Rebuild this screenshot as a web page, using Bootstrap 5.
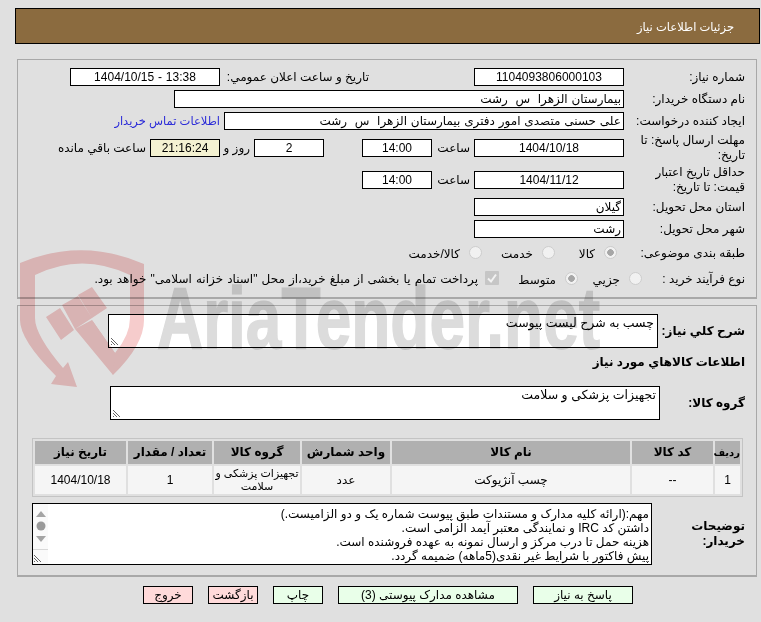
<!DOCTYPE html>
<html lang="fa" dir="rtl">
<head>
<meta charset="utf-8">
<title>جزئیات اطلاعات نیاز</title>
<link href="https://cdn.jsdelivr.net/npm/bootstrap@5.3.0/dist/css/bootstrap.min.css" rel="stylesheet">
<style>
html,body{height:622px;overflow:hidden}
body{background:#e0e0e0;font-family:"Liberation Sans","DejaVu Sans",sans-serif;font-size:12px;color:#000;line-height:15px;position:relative}
.wmark{position:absolute;left:0;top:0;z-index:2;width:761px;height:622px;pointer-events:none;mix-blend-mode:multiply}
.wmark text{font-family:"Liberation Sans",sans-serif;font-weight:700;font-size:88px;fill:#dcdcdc;stroke:#dcdcdc;stroke-width:1.500}
.sheet{padding:8px 1px 0 15px;position:relative;z-index:1}
.headbar{background:#8b6b3f;border:1px solid #000;height:36px;color:#fff;padding-right:25px;line-height:37px;font-size:11.5px}
.panel-a,.panel-b{border:1px solid #a8a8a8;border-bottom-width:2px;margin-left:2px;margin-right:3px;padding-right:11px}
.panel-a{margin-top:15px;height:240px;padding-top:6px}
.panel-b{margin-top:6px;height:272px;padding-top:8px}
.rowline{min-height:22px}
.rowline.tall{min-height:32px}
.rowline.opts{min-height:26px}
.lab{width:121px;padding-left:6px;flex:none}
.fld{background:#fff;border:1px solid #000;height:18px;line-height:16px;padding:0 2px;flex:none;white-space:pre;word-spacing:.5px}
.num{text-align:center}
.w450{width:450px}.w400{width:400px}.w150{width:150px}.w70{width:70px}
.clock{background:#f4f2d2}
.pubstamp{width:149px;margin-right:105px;flex:none}
.unit-hour{width:38px;margin-right:4px;flex:none}
.unit-day{width:30px;margin-right:4px;flex:none}
.gap38{margin-right:38px}
.remain{margin-right:4px}
.buyerlink{color:#2b2bd8;text-decoration:none;margin-right:4px;font-size:11.5px}
.rd{appearance:none;width:13px;height:13px;margin:0 0 2px 9px;background:#f1f1f1;border:1px solid #cdcdcd;border-radius:50%;flex:none}
.rd.on{background:radial-gradient(circle,#a6a6a6 0 3px,#f1f1f1 3.6px)}
.optxt{padding-top:2px;display:block}
.ckbox{width:14px;height:14px;margin:0 0 2px 7px;flex:none;display:block}
.pad7{padding-right:7px}
.opt1{width:40px}.opt2{width:51px}
.lab-short{width:103px;flex:none}
.opt3{width:64px}.opt4{width:79px}
.wide-sp{word-spacing:.8px}
.area{background:#fff;border:1px solid #000;position:relative;padding:1px 3px;flex:none}
.a550{width:550px;height:34px;font-size:12.5px}
.grip{position:absolute;left:1px;bottom:1px;width:10px;height:10px;display:block}
.lab-b{width:87px;flex:none;font-weight:700}
.lab-c{width:85px;flex:none;font-weight:700}
.lab-d{width:93px;padding-left:30px;flex:none;font-weight:700}
.infoline{height:28px;font-weight:700;margin-bottom:10px}
.itemtable{width:711px;border-collapse:separate;border-spacing:2px;border:1px solid #c4c4c4;margin:18px 2px 0 0;table-layout:fixed}
.itemtable th{background:#b0b0b0;height:23px;text-align:center;font-weight:700;padding:0}
.itemtable th.c1{font-size:10px}
.itemtable td{background:#f5f5f5;height:28px;text-align:center;padding:0;line-height:13px;vertical-align:middle}
.itemtable td.tight{font-size:11px;white-space:nowrap}
.c1{width:25px}.c2{width:81px}.c3{width:238px}.c4{width:88px}.c5{width:86px}.c6{width:84px}.c7{width:91px}
.noteline{margin-top:6px}
.note{width:620px;height:62px;line-height:14px;padding:3px 2px 0 16px;overflow:hidden;white-space:nowrap}
.scrollsim{position:absolute;left:0;top:0;bottom:0;width:15px;background:#fafafa;display:block;height:60px}
.btnbar{margin-top:9px;padding-right:127px;gap:15px}
.act{height:18px;border:1px solid #000;border-radius:0;background:#e9ffe9;color:#000;font-size:12px;line-height:16px;padding:0;flex:none}
.pinkish{background:#ffdada}
.w100{width:100px}.w180{width:180px}.w50{width:50px}
</style>
</head>
<body>
<svg class="wmark" viewBox="0 0 761 622" aria-hidden="true">
  <path fill="#f6cccc" d="M20 263Q82 237 144 264L144 320Q144 345 113 375L92 320 115 353Q130 335 130 318L130 275Q82 252 35 275L35 318Q35 335 63 368L68 362 77 387 51 384 56 376Q20 340 20 320Z"/>
  <path fill="#f6cccc" d="M62 305L78 296 92 318 75 329ZM78 295L92 287 107 308 92 318ZM46 317L60 308 74 330 61 340ZM75 329L92 320 115 353 113 375Z"/>
  <text x="157" y="348" textLength="443" lengthAdjust="spacingAndGlyphs" direction="ltr">AriaTender.net</text>
</svg>
<div class="sheet">
  <div class="headbar">جزئیات اطلاعات نیاز</div>

  <div class="panel-a">
    <div class="d-flex align-items-center rowline">
      <div class="lab">شماره نیاز:</div>
      <div class="fld num w150">1104093806000103</div>
      <div class="pubstamp">تاریخ و ساعت اعلان عمومي:</div>
      <div class="fld num w150">13:38 - 1404/10/15</div>
    </div>
    <div class="d-flex align-items-center rowline">
      <div class="lab">نام دستگاه خریدار:</div>
      <div class="fld w450">بیمارستان الزهرا  س  رشت</div>
    </div>
    <div class="d-flex align-items-center rowline">
      <div class="lab">ایجاد کننده درخواست:</div>
      <div class="fld w400">علی حسنی متصدی امور دفتری بیمارستان الزهرا  س  رشت</div>
      <a class="buyerlink" href="#">اطلاعات تماس خریدار</a>
    </div>
    <div class="d-flex align-items-center rowline tall">
      <div class="lab">مهلت ارسال پاسخ: تا تاریخ:</div>
      <div class="fld num w150">1404/10/18</div>
      <div class="unit-hour">ساعت</div>
      <div class="fld num w70">14:00</div>
      <div class="fld num w70 gap38">2</div>
      <div class="unit-day">روز و</div>
      <div class="fld num w70 clock">21:16:24</div>
      <div class="remain">ساعت باقي مانده</div>
    </div>
    <div class="d-flex align-items-center rowline tall">
      <div class="lab">حداقل تاریخ اعتبار قیمت: تا تاریخ:</div>
      <div class="fld num w150">1404/11/12</div>
      <div class="unit-hour">ساعت</div>
      <div class="fld num w70">14:00</div>
    </div>
    <div class="d-flex align-items-center rowline">
      <div class="lab">استان محل تحویل:</div>
      <div class="fld w150">گیلان</div>
    </div>
    <div class="d-flex align-items-center rowline">
      <div class="lab">شهر محل تحویل:</div>
      <div class="fld w150">رشت</div>
    </div>
    <div class="d-flex align-items-center rowline opts">
      <div class="lab">طبقه بندی موضوعی:</div>
      <div class="d-flex align-items-center pad7">
        <input class="rd on" type="radio" disabled checked aria-label="کالا"><span class="optxt opt1">کالا</span>
      </div>
      <div class="d-flex align-items-center">
        <input class="rd" type="radio" disabled aria-label="خدمت"><span class="optxt opt2">خدمت</span>
      </div>
      <div class="d-flex align-items-center">
        <input class="rd" type="radio" disabled aria-label="کالا/خدمت"><span class="optxt">کالا/خدمت</span>
      </div>
    </div>
    <div class="d-flex align-items-center rowline opts">
      <div class="lab-short">نوع فرآیند خرید :</div>
      <div class="d-flex align-items-center opt3">
        <input class="rd" type="radio" disabled aria-label="جزیي"><span class="optxt">جزیي</span>
      </div>
      <div class="d-flex align-items-center opt4">
        <input class="rd on" type="radio" disabled checked aria-label="متوسط"><span class="optxt">متوسط</span>
      </div>
      <svg class="ckbox" viewBox="0 0 14 14" aria-hidden="true"><rect width="14" height="14" rx="1" fill="#c6c6c6"/><path d="M3 7.500l3 3 5-7" fill="none" stroke="#f2f2f2" stroke-width="2"/></svg>
      <span class="wide-sp">پرداخت تمام یا بخشی از مبلغ خرید،از محل "اسناد خزانه اسلامی" خواهد بود.</span>
    </div>
  </div>

  <div class="panel-b">
    <div class="d-flex align-items-center">
      <div class="lab-b">شرح کلي نیاز:</div>
      <div class="area a550">چسب به شرح لیست پیوست
        <svg class="grip" viewBox="0 0 10 10" aria-hidden="true"><path d="M1 2l7 7M1 5l4 4M1 8l1 1" stroke="#666" stroke-width="1"/></svg>
      </div>
    </div>
    <div class="d-flex align-items-center infoline">اطلاعات کالاهاي مورد نیاز</div>
    <div class="d-flex align-items-center">
      <div class="lab-c">گروه کالا:</div>
      <div class="area a550">تجهیزات پزشکی و سلامت
        <svg class="grip" viewBox="0 0 10 10" aria-hidden="true"><path d="M1 2l7 7M1 5l4 4M1 8l1 1" stroke="#666" stroke-width="1"/></svg>
      </div>
    </div>
    <table class="itemtable">
      <thead>
        <tr><th class="c1">ردیف</th><th class="c2">کد کالا</th><th class="c3">نام کالا</th><th class="c4">واحد شمارش</th><th class="c5">گروه کالا</th><th class="c6">تعداد / مقدار</th><th class="c7">تاریخ نیاز</th></tr>
      </thead>
      <tbody>
        <tr><td>1</td><td>--</td><td>چسب آنژیوکت</td><td>عدد</td><td class="tight">تجهیزات پزشکی و<br>سلامت</td><td>1</td><td>1404/10/18</td></tr>
      </tbody>
    </table>
    <div class="d-flex align-items-center noteline">
      <div class="lab-d">توضیحات خریدار:</div>
      <div class="area note">مهم:(ارائه کلیه مدارک و مستندات طبق پیوست شماره یک و دو الزامیست.)<br>داشتن کد IRC و نمایندگی معتبر آیمد الزامی است.<br>هزینه حمل تا درب مرکز و ارسال نمونه به عهده فروشنده است.<br>پیش فاکتور با شرایط غیر نقدی(5ماهه) ضمیمه گردد.
        <svg class="scrollsim" viewBox="0 0 15 60" aria-hidden="true">
          <path d="M3 13L8 7 13 13Z" fill="#a4a4a4"/><circle cx="8" cy="22" r="4.500" fill="#9a9a9a"/><path d="M3 32L8 38 13 32Z" fill="#a4a4a4"/>
          <path d="M0 45.500H15" stroke="#d8d8d8"/><path d="M1 51l7 7M1 54l4 4M1 57l1 1" stroke="#666"/>
        </svg>
      </div>
    </div>
  </div>

  <div class="d-flex btnbar">
    <button class="btn act w100" type="button">پاسخ به نیاز</button>
    <button class="btn act w180" type="button">مشاهده مدارک پیوستی (3)</button>
    <button class="btn act w50" type="button">چاپ</button>
    <button class="btn act w50 pinkish" type="button">بازگشت</button>
    <button class="btn act w50 pinkish" type="button">خروج</button>
  </div>
</div>
</body>
</html>
